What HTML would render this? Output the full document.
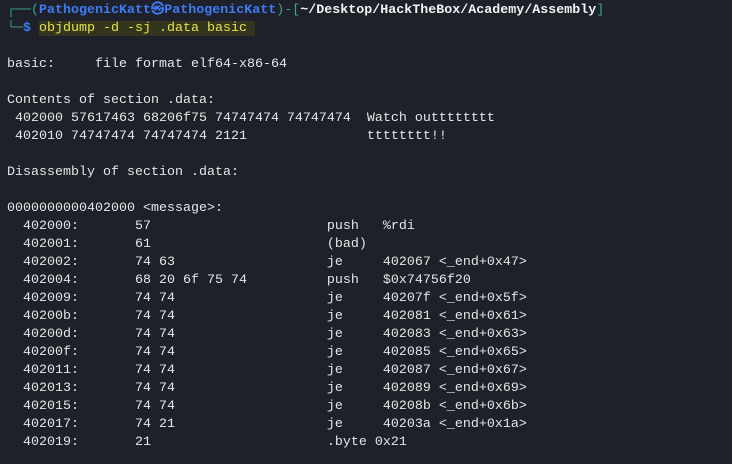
<!DOCTYPE html>
<html><head><style>
html,body{margin:0;padding:0;background:#1e2129;width:732px;height:464px;overflow:hidden}
pre{margin:0;padding:2px 0 0 7px;font-family:"Liberation Mono","DejaVu Sans Mono",monospace;font-size:13.33px;line-height:18px;color:#e6e6e6;white-space:pre}
.g{color:#3aa58f}.b{color:#3e7cf5;font-weight:bold}.w{color:#f2f2f2;font-weight:bold}
.y{color:#e6e24a;background:#33351c}
</style></head><body>
<pre><span class="g">┌──(</span><span class="b">PathogenicKatt㉿PathogenicKatt</span><span class="g">)-[</span><span class="w">~/Desktop/HackTheBox/Academy/Assembly</span><span class="g">]</span>
<span class="g">└─</span><span class="b">$</span> <span class="y">objdump -d -sj .data basic </span>

basic:     file format elf64-x86-64

Contents of section .data:
 402000 57617463 68206f75 74747474 74747474  Watch outttttttt
 402010 74747474 74747474 2121               tttttttt!!

Disassembly of section .data:

0000000000402000 &lt;message&gt;:
  402000:       57                      push   %rdi
  402001:       61                      (bad)
  402002:       74 63                   je     402067 &lt;_end+0x47&gt;
  402004:       68 20 6f 75 74          push   $0x74756f20
  402009:       74 74                   je     40207f &lt;_end+0x5f&gt;
  40200b:       74 74                   je     402081 &lt;_end+0x61&gt;
  40200d:       74 74                   je     402083 &lt;_end+0x63&gt;
  40200f:       74 74                   je     402085 &lt;_end+0x65&gt;
  402011:       74 74                   je     402087 &lt;_end+0x67&gt;
  402013:       74 74                   je     402089 &lt;_end+0x69&gt;
  402015:       74 74                   je     40208b &lt;_end+0x6b&gt;
  402017:       74 21                   je     40203a &lt;_end+0x1a&gt;
  402019:       21                      .byte 0x21</pre>
</body></html>
